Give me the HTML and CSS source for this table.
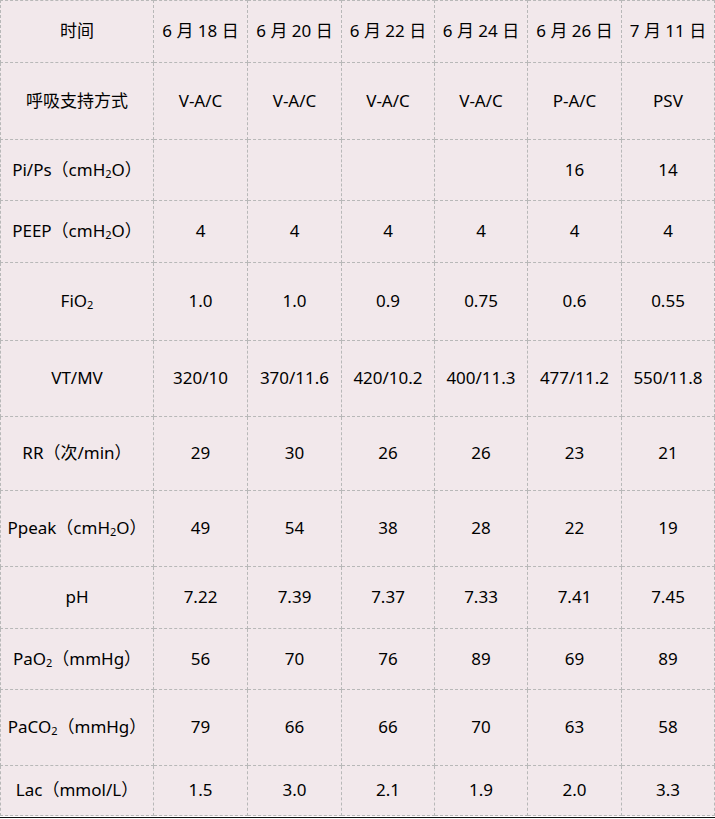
FILE: index.html
```html
<!DOCTYPE html>
<html lang="zh">
<head>
<meta charset="utf-8">
<title>呼吸支持参数</title>
<link rel="stylesheet" href="styles.css">
</head>
<body>
<table class="vent">
  <colgroup>
    <col class="c-label">
    <col class="c-a"><col class="c-a"><col class="c-b"><col class="c-b"><col class="c-a"><col class="c-b">
  </colgroup>
  <tbody>
    <tr class="r62"><td>时间</td><td>6 月 18 日</td><td>6 月 20 日</td><td>6 月 22 日</td><td>6 月 24 日</td><td>6 月 26 日</td><td>7 月 11 日</td></tr>
    <tr class="r77"><td>呼吸支持方式</td><td>V-A/C</td><td>V-A/C</td><td>V-A/C</td><td>V-A/C</td><td>P-A/C</td><td>PSV</td></tr>
    <tr class="r61"><td>Pi/Ps（cmH<sub>2</sub>O）</td><td></td><td></td><td></td><td></td><td>16</td><td>14</td></tr>
    <tr class="r62"><td>PEEP（cmH<sub>2</sub>O）</td><td>4</td><td>4</td><td>4</td><td>4</td><td>4</td><td>4</td></tr>
    <tr class="r78"><td>FiO<sub>2</sub></td><td>1.0</td><td>1.0</td><td>0.9</td><td>0.75</td><td>0.6</td><td>0.55</td></tr>
    <tr class="r76"><td>VT/MV</td><td>320/10</td><td>370/11.6</td><td>420/10.2</td><td>400/11.3</td><td>477/11.2</td><td>550/11.8</td></tr>
    <tr class="r74"><td>RR（次/min）</td><td>29</td><td>30</td><td>26</td><td>26</td><td>23</td><td>21</td></tr>
    <tr class="r76"><td>Ppeak（cmH<sub>2</sub>O）</td><td>49</td><td>54</td><td>38</td><td>28</td><td>22</td><td>19</td></tr>
    <tr class="r62"><td>pH</td><td>7.22</td><td>7.39</td><td>7.37</td><td>7.33</td><td>7.41</td><td>7.45</td></tr>
    <tr class="r61"><td>PaO<sub>2</sub>（mmHg）</td><td>56</td><td>70</td><td>76</td><td>89</td><td>69</td><td>89</td></tr>
    <tr class="r76"><td>PaCO<sub>2</sub>（mmHg）</td><td>79</td><td>66</td><td>66</td><td>70</td><td>63</td><td>58</td></tr>
    <tr class="r50"><td>Lac（mmol/L）</td><td>1.5</td><td>3.0</td><td>2.1</td><td>1.9</td><td>2.0</td><td>3.3</td></tr>
  </tbody>
</table>
<div class="rule"></div>
</body>
</html>
```
FILE: styles.css
```css
html, body {
  margin: 0;
  padding: 0;
  background: #ffffff;
}

.vent {
  border-collapse: collapse;
  table-layout: fixed;
  width: 715px;
  background: #f2e8eb;
  font-family: "Noto Sans", "Noto Sans CJK SC", sans-serif;
  font-size: 17px;
  color: #000;
}

.c-label { width: 153px; }
.c-a { width: 94px; }
.c-b { width: 93px; }

.vent td {
  border: 1px dashed #b8b8b8;
  text-align: center;
  vertical-align: middle;
  padding: 0;
  white-space: nowrap;
  line-height: 1.2;
}

.vent sub {
  font-size: 11px;
  vertical-align: -2px;
  line-height: 0;
}

.r50 { height: 50px; }
.r61 { height: 61px; }
.r62 { height: 62px; }
.r74 { height: 74px; }
.r76 { height: 76px; }
.r77 { height: 77px; }
.r78 { height: 78px; }

.rule {
  margin-top: 1px;
  height: 1px;
  background: #111;
  width: 715px;
}
```
